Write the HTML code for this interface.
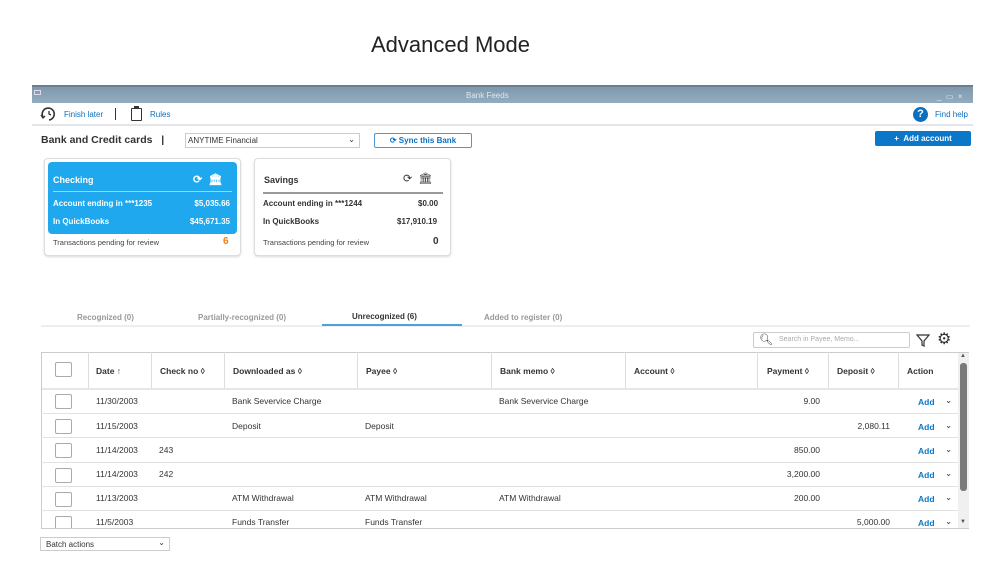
<!DOCTYPE html>
<html><head><meta charset="utf-8"><style>
*{box-sizing:border-box;margin:0;padding:0}
body{width:999px;height:562px;background:#fff;font-family:"Liberation Sans",sans-serif;position:relative;overflow:hidden;color:#333}
.a{position:absolute}
.t{font-size:8px}
.b{font-weight:bold}
.card{position:absolute;border:1px solid #ddd;border-radius:4px;background:#fff;box-shadow:0 1px 2px rgba(0,0,0,.15)}
.row{position:absolute;left:41px;width:917px;border-bottom:1px solid #e2e2e2;font-size:8.5px;color:#333}
.cb{position:absolute;left:14px;width:17px;height:15px;border:1px solid #aaa;border-radius:2px;background:#fff}
.vl{position:absolute;top:352px;height:36px;width:1px;background:#ddd}
.h{position:absolute;top:366px;font-size:8.5px;font-weight:bold;color:#333}
.add{color:#0b77c8;font-weight:bold}
.p{position:absolute;right:138px}
.d{position:absolute;right:68px}
</style></head><body>
<div class="a" style="left:371px;top:32px;font-size:22px;color:#222">Advanced Mode</div>
<div class="a" style="left:32px;top:85px;width:941px;height:18px;background:linear-gradient(#7e98ad,#94acc0);border-top:2px solid #6b7f91"></div>
<div class="a" style="left:34px;top:90px;width:7px;height:5px;border:1px solid #dde;"></div>
<div class="a" style="left:466px;top:91px;font-size:8px;color:#dfe8f0">Bank Feeds</div>
<div class="a" style="left:937px;top:92px;font-size:8px;color:#dfe8f0">_ &nbsp;▭ &nbsp;×</div>
<div class="a" style="left:32px;top:124px;width:941px;height:2px;background:#e3e5ea"></div>
<svg class="a" style="left:40px;top:107px" width="18" height="14" viewBox="0 0 18 14"><path d="M3 10A6 6 0 1 1 9 13" fill="none" stroke="#333" stroke-width="1.6"/><path d="M9 4v3l2 1" fill="none" stroke="#333" stroke-width="1.3"/><path d="M1 8l2 3 2-2" fill="none" stroke="#333" stroke-width="1.3"/></svg>
<div class="a t" style="left:64px;top:110px;color:#0b6fc0">Finish later</div>
<div class="a" style="left:115px;top:108px;width:1px;height:12px;background:#333"></div>
<div class="a" style="left:131px;top:108px;width:11px;height:13px;border:1.5px solid #333;border-radius:1px"></div>
<div class="a" style="left:134px;top:106px;width:5px;height:3px;background:#333"></div>
<div class="a t" style="left:150px;top:110px;color:#0b6fc0">Rules</div>
<div class="a" style="left:913px;top:107px;width:15px;height:15px;border-radius:50%;background:#0b6fc0;color:#fff;font-size:11px;font-weight:bold;text-align:center;line-height:15px">?</div>
<div class="a t" style="left:935px;top:110px;color:#0b6fc0">Find help</div>
<div class="a b" style="left:41px;top:134px;font-size:10.5px;color:#333">Bank and Credit cards &nbsp;&nbsp;|</div>
<div class="a" style="left:185px;top:133px;width:175px;height:15px;border:1px solid #ccc;font-size:8px;padding:2px 2px">ANYTIME Financial<span style="position:absolute;right:4px;top:1px">⌄</span></div>
<div class="a" style="left:374px;top:133px;width:98px;height:15px;border:1px solid #4a9ad8;border-radius:2px;font-size:8px;color:#0b6fc0;font-weight:bold;text-align:center;line-height:13px">⟳ Sync this Bank</div>
<div class="a" style="left:875px;top:131px;width:96px;height:15px;background:#0b77c8;border-radius:2px;font-size:8px;color:#fff;font-weight:bold;text-align:center;line-height:15px">+ &nbsp;Add account</div>
<div class="card" style="left:44px;top:158px;width:197px;height:98px"></div>
<div class="a" style="left:48px;top:162px;width:189px;height:72px;background:#1fa8ee;border-radius:4px;color:#fff;font-size:8px;font-weight:bold">
<div class="a" style="left:5px;top:13px;font-size:9px">Checking</div>
<div class="a" style="left:145px;top:11px;font-size:11px">⟳ &nbsp;🏛</div>
<div class="a" style="left:5px;top:29px;width:179px;height:1px;background:#9dd6f7"></div>
<div class="a" style="left:5px;top:37px">Account ending in ***1235</div><div class="a" style="right:7px;top:37px">$5,035.66</div>
<div class="a" style="left:5px;top:55px">In QuickBooks</div><div class="a" style="right:7px;top:55px">$45,671.35</div>
</div>
<div class="a t" style="left:53px;top:238px;color:#444;font-size:7.5px">Transactions pending for review</div>
<div class="a b" style="left:223px;top:236px;color:#f07c1a;font-size:10px">6</div>
<div class="card" style="left:254px;top:158px;width:197px;height:98px"></div>
<div class="a b" style="left:264px;top:175px;font-size:9px">Savings</div>
<div class="a" style="left:403px;top:172px;font-size:11px;color:#333">⟳ &nbsp;🏛</div>
<div class="a" style="left:263px;top:192px;width:180px;height:1.5px;background:#999"></div>
<div class="a t b" style="left:263px;top:199px">Account ending in ***1244</div><div class="a t b" style="left:418px;top:199px">$0.00</div>
<div class="a t b" style="left:263px;top:217px">In QuickBooks</div><div class="a t b" style="left:397px;top:217px">$17,910.19</div>
<div class="a t" style="left:263px;top:238px;color:#444;font-size:7.5px">Transactions pending for review</div>
<div class="a b" style="left:433px;top:236px;font-size:10px">0</div>
<div class="a" style="left:41px;top:325px;width:929px;height:2px;background:#eee"></div>
<div class="a" style="left:322px;top:324px;width:140px;height:2px;background:#4aa3df"></div>
<div class="a t b" style="left:77px;top:313px;color:#999">Recognized (0)</div>
<div class="a t b" style="left:198px;top:313px;color:#999">Partially-recognized (0)</div>
<div class="a t b" style="left:352px;top:312px;color:#333">Unrecognized (6)</div>
<div class="a t b" style="left:484px;top:313px;color:#999">Added to register (0)</div>
<div class="a" style="left:753px;top:332px;width:157px;height:16px;border:1px solid #ccc;border-radius:2px;font-size:7px;color:#aaa;padding:3px 0 0 25px">Search in Payee, Memo...</div>
<div class="a" style="left:759px;top:333px;font-size:11px;color:#333">&#x1F50D;&#xFE0E;</div>
<svg class="a" style="left:916px;top:333px" width="14" height="14"><path d="M1 2h12L8 8v5L6 12V8z" fill="none" stroke="#333" stroke-width="1.2"/></svg>
<div class="a" style="left:937px;top:329px;font-size:16px;color:#333">⚙</div>
<div class="a" style="left:41px;top:352px;width:928px;height:177px;border:1px solid #ccc"></div>
<div class="a" style="left:42px;top:388px;width:916px;height:2px;background:#e6e6e6"></div>
<div class="vl" style="left:88px"></div><div class="vl" style="left:151px"></div><div class="vl" style="left:224px"></div><div class="vl" style="left:357px"></div><div class="vl" style="left:491px"></div><div class="vl" style="left:625px"></div><div class="vl" style="left:757px"></div><div class="vl" style="left:828px"></div><div class="vl" style="left:898px"></div>
<div class="cb" style="left:55px;top:362px"></div>
<div class="h" style="left:96px">Date ↑</div><div class="h" style="left:160px">Check no ◊</div><div class="h" style="left:233px">Downloaded as ◊</div><div class="h" style="left:366px">Payee ◊</div><div class="h" style="left:500px">Bank memo ◊</div><div class="h" style="left:634px">Account ◊</div><div class="h" style="left:767px">Payment ◊</div><div class="h" style="left:837px">Deposit ◊</div><div class="h" style="left:907px">Action</div>
<div class="a" style="left:958px;top:353px;width:11px;height:175px;background:#f0f0f0"></div>
<div class="a" style="left:960px;top:363px;width:7px;height:128px;background:#7a7a7a;border-radius:3px"></div>
<div class="a" style="left:960px;top:353px;font-size:6px;color:#555">▲</div>
<div class="a" style="left:960px;top:519px;font-size:6px;color:#555">▼</div>
<div class="row" style="top:389px;height:25px"><div class="cb" style="top:5px"></div><span class="a" style="left:55px;top:7px">11/30/2003</span><span class="a" style="left:191px;top:7px">Bank Severvice Charge</span><span class="a" style="left:458px;top:7px">Bank Severvice Charge</span><span class="p" style="top:7px">9.00</span><span class="a add" style="left:877px;top:8px">Add</span><span class="a" style="left:904px;top:6px">⌄</span></div>
<div class="row" style="top:414px;height:24px"><div class="cb" style="top:5px"></div><span class="a" style="left:55px;top:7px">11/15/2003</span><span class="a" style="left:191px;top:7px">Deposit</span><span class="a" style="left:324px;top:7px">Deposit</span><span class="d" style="top:7px">2,080.11</span><span class="a add" style="left:877px;top:8px">Add</span><span class="a" style="left:904px;top:6px">⌄</span></div>
<div class="row" style="top:438px;height:25px"><div class="cb" style="top:5px"></div><span class="a" style="left:55px;top:7px">11/14/2003</span><span class="a" style="left:118px;top:7px">243</span><span class="p" style="top:7px">850.00</span><span class="a add" style="left:877px;top:8px">Add</span><span class="a" style="left:904px;top:6px">⌄</span></div>
<div class="row" style="top:463px;height:24px"><div class="cb" style="top:5px"></div><span class="a" style="left:55px;top:6px">11/14/2003</span><span class="a" style="left:118px;top:6px">242</span><span class="p" style="top:6px">3,200.00</span><span class="a add" style="left:877px;top:7px">Add</span><span class="a" style="left:904px;top:5px">⌄</span></div>
<div class="row" style="top:487px;height:24px"><div class="cb" style="top:5px"></div><span class="a" style="left:55px;top:6px">11/13/2003</span><span class="a" style="left:191px;top:6px">ATM Withdrawal</span><span class="a" style="left:324px;top:6px">ATM Withdrawal</span><span class="a" style="left:458px;top:6px">ATM Withdrawal</span><span class="p" style="top:6px">200.00</span><span class="a add" style="left:877px;top:7px">Add</span><span class="a" style="left:904px;top:5px">⌄</span></div>
<div class="row" style="top:511px;height:17px;border:none;overflow:hidden"><div class="cb" style="top:5px"></div><span class="a" style="left:55px;top:6px">11/5/2003</span><span class="a" style="left:191px;top:6px">Funds Transfer</span><span class="a" style="left:324px;top:6px">Funds Transfer</span><span class="d" style="top:6px">5,000.00</span><span class="a add" style="left:877px;top:7px">Add</span><span class="a" style="left:904px;top:5px">⌄</span></div>
<div class="a" style="left:40px;top:537px;width:130px;height:14px;border:1px solid #ccc;font-size:8px;padding:2px 5px;color:#333">Batch actions<span style="position:absolute;right:4px;top:0">⌄</span></div>
</body></html>
